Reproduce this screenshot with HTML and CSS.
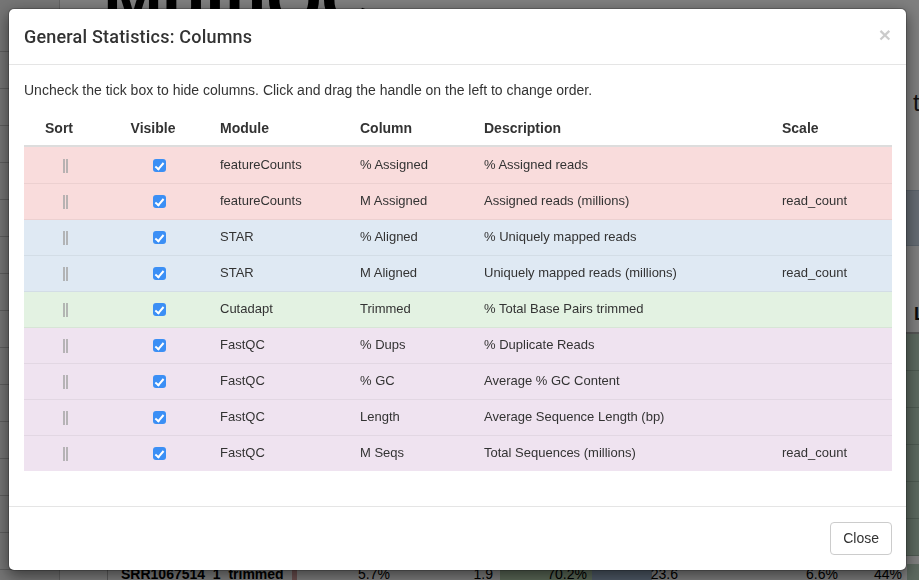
FILE: index.html
```html
<!DOCTYPE html>
<html>
<head>
<meta charset="utf-8">
<title>General Statistics: Columns</title>
<link rel="stylesheet" href="styles.css">
</head>
<body>
<div class="page">
  <aside class="sidebar">
    <div class="side-item"></div><div class="side-item"></div><div class="side-item"></div>
    <div class="side-item"></div><div class="side-item"></div><div class="side-item"></div>
    <div class="side-item"></div><div class="side-item"></div><div class="side-item"></div>
    <div class="side-item"></div><div class="side-item"></div><div class="side-item"></div>
    <div class="side-item"></div><div class="side-item"></div><div class="side-item"></div>
  </aside>
  <main class="main">
    <h1 class="logo">MultiQC</h1>
    <p class="intro">Report generated to</p>
    <div class="notice"></div>
    <div class="bg-thead">L</div>
    <div class="bg-rows">
      <div class="bg-row"></div><div class="bg-row"></div><div class="bg-row"></div>
      <div class="bg-row"></div><div class="bg-row"></div><div class="bg-row"></div>
      <div class="bg-row last">
        <span class="c-name">SRR1067514_1_trimmed</span>
        <span class="c-bar red"></span>
        <span class="c-num w1">5.7%</span>
        <span class="c-num w2">1.9</span>
        <span class="c-num w3">70.2%</span>
        <span class="c-num w4">23.6</span>
        <span class="c-num w5">6.6%</span>
        <span class="c-num w6">44%</span>
      </div>
    </div>
  </main>
</div>

<div class="backdrop"></div>

<div class="modal">
  <div class="modal-dialog">
    <div class="modal-header">
      <h4 class="modal-title">General Statistics: Columns</h4>
      <span class="close">&times;</span>
    </div>
    <div class="modal-body">
      <p class="help">Uncheck the tick box to hide columns. Click and drag the handle on the left to change order.</p>
      <table class="cols">
        <colgroup>
          <col class="w-sort"><col class="w-vis"><col class="w-mod"><col class="w-col"><col class="w-desc"><col class="w-scale">
        </colgroup>
        <thead>
          <tr><th class="center">Sort</th><th class="center">Visible</th><th>Module</th><th>Column</th><th>Description</th><th>Scale</th></tr>
        </thead>
        <tbody>
          <tr class="red"><td class="sort"><span class="handle"></span></td><td class="vis"><span class="cb"></span></td><td>featureCounts</td><td>% Assigned</td><td>% Assigned reads</td><td></td></tr>
          <tr class="red"><td class="sort"><span class="handle"></span></td><td class="vis"><span class="cb"></span></td><td>featureCounts</td><td>M Assigned</td><td>Assigned reads (millions)</td><td>read_count</td></tr>
          <tr class="blue"><td class="sort"><span class="handle"></span></td><td class="vis"><span class="cb"></span></td><td>STAR</td><td>% Aligned</td><td>% Uniquely mapped reads</td><td></td></tr>
          <tr class="blue"><td class="sort"><span class="handle"></span></td><td class="vis"><span class="cb"></span></td><td>STAR</td><td>M Aligned</td><td>Uniquely mapped reads (millions)</td><td>read_count</td></tr>
          <tr class="green"><td class="sort"><span class="handle"></span></td><td class="vis"><span class="cb"></span></td><td>Cutadapt</td><td>Trimmed</td><td>% Total Base Pairs trimmed</td><td></td></tr>
          <tr class="purple"><td class="sort"><span class="handle"></span></td><td class="vis"><span class="cb"></span></td><td>FastQC</td><td>% Dups</td><td>% Duplicate Reads</td><td></td></tr>
          <tr class="purple"><td class="sort"><span class="handle"></span></td><td class="vis"><span class="cb"></span></td><td>FastQC</td><td>% GC</td><td>Average % GC Content</td><td></td></tr>
          <tr class="purple"><td class="sort"><span class="handle"></span></td><td class="vis"><span class="cb"></span></td><td>FastQC</td><td>Length</td><td>Average Sequence Length (bp)</td><td></td></tr>
          <tr class="purple"><td class="sort"><span class="handle"></span></td><td class="vis"><span class="cb"></span></td><td>FastQC</td><td>M Seqs</td><td>Total Sequences (millions)</td><td>read_count</td></tr>
        </tbody>
      </table>
    </div>
    <div class="modal-footer">
      <button class="btn">Close</button>
    </div>
  </div>
</div>
</body>
</html>
```

FILE: styles.css
```css
* { box-sizing: border-box; }
html, body { margin: 0; padding: 0; }
body {
  width: 919px;
  height: 580px;
  overflow: hidden;
  background: #fff;
  font-family: "Liberation Sans", Arial, sans-serif;
  color: #333;
  position: relative;
}

/* ---------- background page ---------- */
.page {
  display: flex;
  width: 919px;
  height: 620px;
  overflow: hidden;
}
.sidebar {
  flex: 0 0 60px;
  width: 60px;
  background: #ebebeb;
  border-right: 1px solid #c8c8c8;
  padding-top: 15px;
}
.side-item {
  height: 37px;
  border-bottom: 1px solid #bdbdbd;
}
.main {
  flex: 1;
  min-width: 0;
  padding-left: 47px;
  display: flex;
  flex-direction: column;
}
.logo {
  margin: -40px 0 0 -4px;
  height: 80px;
  font-size: 72px;
  line-height: 80px;
  font-weight: bold;
  color: #000;
  letter-spacing: -1px;
  white-space: nowrap;
}
.intro {
  margin: 48px -14px 0 0;
  font-size: 24px;
  line-height: 30px;
  text-align: right;
  white-space: nowrap;
  color: #222;
}
.notice {
  margin: 72px -20px 0 0;
  height: 56px;
  background: #cad8e6;
  border: 1px solid #b5c6d6;
}
.bg-thead {
  margin: 54px -6px 0 0;
  height: 28px;
  font-size: 18px;
  font-weight: bold;
  text-align: right;
  color: #111;
  padding-right: 0;
  line-height: 28px;
  white-space: nowrap;
}
.bg-rows {
  margin-right: -20px;
  border-top: 2px solid #aaa;
  margin-top: 4px;
}
.bg-row {
  height: 37px;
  border-bottom: 1px solid #9cb4a3;
  background: linear-gradient(to right, #fff 0, #fff 780px, #b9d2bf 780px);
}
.bg-row.last {
  display: flex;
  align-items: flex-start;
  height: 40px;
  background: linear-gradient(to right, #fff 0, #fff 800px, #b9d2bf 800px);
  margin-top: 8px;
  font-size: 14px;
  color: #000;
  white-space: nowrap;
}
.c-name {
  flex: 0 0 185px;
  padding-left: 13px;
  font-weight: bold;
  border-left: 1px solid #bbb;
  line-height: 20px;
}
.c-bar { flex: 0 0 5px; height: 30px; }
.c-bar.red { background: #d9a0a0; }
.c-num { text-align: right; line-height: 20px; flex: 0 0 auto; }
.w1 { width: 93px; }
.w2 { width: 103px; }
.w3 { width: 99px; padding-right: 5px; background: linear-gradient(to right, #fff 0, #fff 7px, #b7d3b0 7px); }
.w4 { width: 86px; background: linear-gradient(to right, #9fb6d0 0, #9fb6d0 60px, #fff 60px); }
.w5 { width: 160px; }
.w6 { width: 64px; }

/* ---------- backdrop ---------- */
.backdrop {
  position: fixed;
  inset: 0;
  background: rgba(0, 0, 0, 0.5);
}

/* ---------- modal ---------- */
.modal {
  position: fixed;
  inset: 0;
}
.modal-dialog {
  margin: 8px 0 0 8px;
  width: 899px;
  background: #fff;
  border: 1px solid rgba(0, 0, 0, 0.2);
  border-radius: 6px;
  box-shadow: 0 5px 15px rgba(0, 0, 0, 0.5);
  background-clip: padding-box;
}
.modal-header {
  display: flex;
  align-items: flex-start;
  justify-content: space-between;
  padding: 15px 14px 15px 15px;
  border-bottom: 1px solid #e5e5e5;
}
.modal-title {
  margin: 0;
  font-family: Roboto, "Liberation Sans", Arial, sans-serif;
  font-size: 18px;
  line-height: 25px;
  font-weight: 500;
  letter-spacing: 0.2px;
  color: #333;
}
.close {
  font-size: 21px;
  font-weight: bold;
  line-height: 21px;
  color: #000;
  opacity: 0.2;
  margin: 0 1px 0 0;
}
.modal-body {
  padding: 15px 14px 15px 15px;
}
.help {
  margin: 0 0 10px;
  font-size: 14px;
  line-height: 20px;
}
.cols {
  width: 868px;
  border-collapse: collapse;
  border-spacing: 0;
  margin-bottom: 20px;
  table-layout: fixed;
}
.w-sort { width: 70px; }
.w-vis { width: 118px; }
.w-mod { width: 140px; }
.w-col { width: 124px; }
.w-desc { width: 298px; }
.w-scale { width: 118px; }
.cols th {
  font-size: 14px;
  font-weight: bold;
  line-height: 19px;
  padding: 9px 8px 7px;
  text-align: left;
  border-bottom: 2px solid #ddd;
}
.cols th.center { text-align: center; }
.cols td {
  font-size: 13px;
  line-height: 19px;
  padding: 7px 8px 9px;
  border-top: 1px solid rgba(0, 0, 0, 0.05);
  vertical-align: middle;
}
.cols tbody tr:first-child td { border-top: none; padding-top: 8px; }
.cols td.sort, .cols td.vis {
  text-align: center;
  padding-left: 18px;
  padding-right: 6px;
}
tr.red td { background: #f9dcdc; }
tr.blue td { background: #dfe9f3; }
tr.green td { background: #e3f2e2; }
tr.purple td { background: #efe3f0; }

.handle {
  display: inline-block;
  vertical-align: middle;
  width: 5px;
  height: 14px;
  border-left: 2px solid #a8a8a8;
  border-right: 2px solid #a8a8a8;
  opacity: 0.8;
}
.cb {
  display: inline-block;
  vertical-align: middle;
  width: 13px;
  height: 13px;
  border-radius: 3px;
  background: #3b8ff5;
  position: relative;
}
.cb::after {
  content: "";
  position: absolute;
  left: 4px;
  top: 1.5px;
  width: 3px;
  height: 7px;
  border: solid #fff;
  border-width: 0 2px 2px 0;
  transform: rotate(40deg);
}

.modal-footer {
  display: flex;
  justify-content: flex-end;
  padding: 15px 14px 15px 15px;
  border-top: 1px solid #e5e5e5;
}
.btn {
  font-family: "Liberation Sans", Arial, sans-serif;
  font-size: 14px;
  line-height: 19px;
  padding: 6px 12px;
  color: #333;
  background: #fff;
  border: 1px solid #ccc;
  border-radius: 4px;
}
```
